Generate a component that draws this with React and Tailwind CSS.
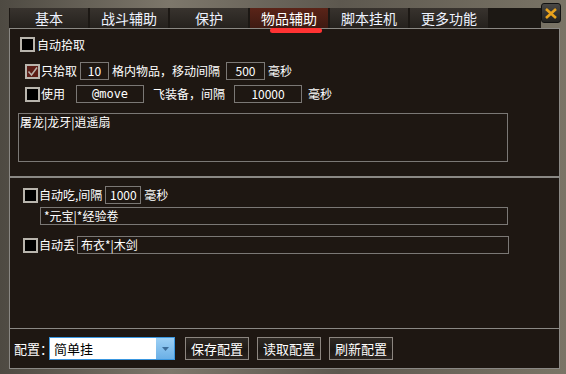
import React from 'react';

const tabs = ['基本', '战斗辅助', '保护', '物品辅助', '脚本挂机', '更多功能'];

function Check({ checked }) {
  return (
    <span className={`w-[15px] h-[15px] border-2 border-[#b9b5ad] flex items-center justify-center shrink-0 ${checked ? 'bg-[#5c1d16]' : 'bg-black'}`}>
      {checked && (
        <svg width="11" height="11" viewBox="0 0 11 11">
          <path d="M1.5 5.5 L4.5 9 L10 1.5" stroke="#b8b0a8" strokeWidth="1.5" fill="none" />
        </svg>
      )}
    </span>
  );
}

function Box({ children, className }) {
  return (
    <span className={`h-[18px] border border-[#7b7875] flex items-center justify-center text-[12px] text-white ${className}`}>
      {children}
    </span>
  );
}

function Btn({ children }) {
  return (
    <button className="w-[64px] h-[23px] border border-[#8c8680] bg-[linear-gradient(#2e2924,#1d1814_60%,#2a2420)] text-[13px] text-white">
      {children}
    </button>
  );
}

export default function App() {
  return (
    <div
      className="relative w-[566px] h-[374px] overflow-hidden bg-[linear-gradient(90deg,#4e4a42,#7d776b_30%,#5d584f_60%,#7a7466)] pl-[9px] pr-[6px] pt-[8px] pb-[5px] flex flex-col"
      style={{ fontFamily: '"Noto Sans CJK SC", "Noto Sans", sans-serif' }}
    >
      {/* close */}
      <div className="absolute left-[541px] top-[3px] w-[20px] h-[20px] rounded-[3px] bg-[linear-gradient(#4a4845,#232220)] border border-[#111] flex items-center justify-center">
        <svg width="12" height="11" viewBox="0 0 12 11">
          <path d="M1 1 L11 10 M11 1 L1 10" stroke="#e9a31d" strokeWidth="2.6" />
        </svg>
      </div>

      {/* tabs */}
      <div className="flex h-[20px] gap-[2px] pl-[1px] bg-[#1c1814] w-[532px]">
        {tabs.map((t) => {
          const active = t === '物品辅助';
          return (
            <div
              key={t}
              className={`relative w-[78px] h-full flex items-center justify-center text-[14px] leading-none ${
                active
                  ? 'bg-[linear-gradient(#5a2418,#3e1a12)] text-white'
                  : 'bg-[linear-gradient(#38332e,#25211d)] text-[#eef3ff]'
              }`}
            >
              {t}
              {active && <span className="absolute left-[20px] top-[20px] w-[52px] h-[5px] rounded-full bg-[#ff3333] z-10" />}
            </div>
          );
        })}
      </div>

      {/* panel */}
      <div className="flex-1 flex flex-col bg-[#1e1712] border-l border-r border-b border-t border-[#8a8884] text-white text-[12px] leading-none">
        {/* section 1 */}
        <div className="h-[149px] flex flex-col border-b-2 border-[#8a8884]">
          <div className="flex items-center gap-[2px] pl-[10px] mt-[8px]">
            <Check />
            <span>自动拾取</span>
          </div>
          <div className="flex items-center pl-[15px] mt-[10px]">
            <Check checked />
            <span className="ml-[1px]">只拾取</span>
            <Box className="w-[29px] ml-[3px]">10</Box>
            <span className="ml-[3px]">格内物品，移动间隔</span>
            <Box className="w-[39px] ml-[6px]">500</Box>
            <span className="ml-[3px]">毫秒</span>
          </div>
          <div className="flex items-center pl-[15px] mt-[5px]">
            <Check />
            <span className="ml-[1px]">使用</span>
            <Box className="w-[68px] ml-[11px] text-[10px] font-['DejaVu_Sans_Mono']">@move</Box>
            <span className="ml-[9px]">飞装备，间隔</span>
            <Box className="w-[68px] ml-[9px]">10000</Box>
            <span className="ml-[6px]">毫秒</span>
          </div>
          <div className="ml-[8px] mt-[10px] w-[490px] h-[49px] border border-[#7b7875] pl-[1px] pt-[2px]">
            屠龙|龙牙|逍遥扇
          </div>
        </div>

        {/* section 2 */}
        <div className="h-[151px] flex flex-col border-b border-[#8a8884]">
          <div className="flex items-center pl-[13px] mt-[8px]">
            <Check />
            <span className="ml-[1px]">自动吃,间隔</span>
            <Box className="w-[36px] ml-[3px]">1000</Box>
            <span className="ml-[3px]">毫秒</span>
          </div>
          <div className="ml-[30px] mt-[3px] w-[468px] h-[18px] border border-[#7b7875] flex items-center pl-[3px]">
            *元宝|*经验卷
          </div>
          <div className="flex items-center pl-[13px] mt-[11px]">
            <Check />
            <span className="ml-[1px]">自动丢</span>
            <div className="ml-[2px] w-[432px] h-[18px] border border-[#7b7875] flex items-center pl-[3px]">
              布衣*|木剑
            </div>
          </div>
        </div>

        {/* bottom */}
        <div className="flex-1 flex items-center pl-[4px] text-[13px]">
          <span className="w-[35px] shrink-0 whitespace-nowrap">配置：</span>
          <div className="w-[126px] h-[23px] border border-[#3a97e0] bg-white flex items-center">
            <span className="flex-1 text-black pl-[4px]">简单挂</span>
            <span className="w-[18px] h-full bg-[linear-gradient(#9dd0f5,#6bb0e6)] flex items-center justify-center">
              <svg width="7" height="4" viewBox="0 0 7 4"><path d="M0 0 H7 L3.5 4 Z" fill="#3b6d9a" /></svg>
            </span>
          </div>
          <div className="flex gap-[8px] ml-[10px]">
            <Btn>保存配置</Btn>
            <Btn>读取配置</Btn>
            <Btn>刷新配置</Btn>
          </div>
        </div>
      </div>
    </div>
  );
}
